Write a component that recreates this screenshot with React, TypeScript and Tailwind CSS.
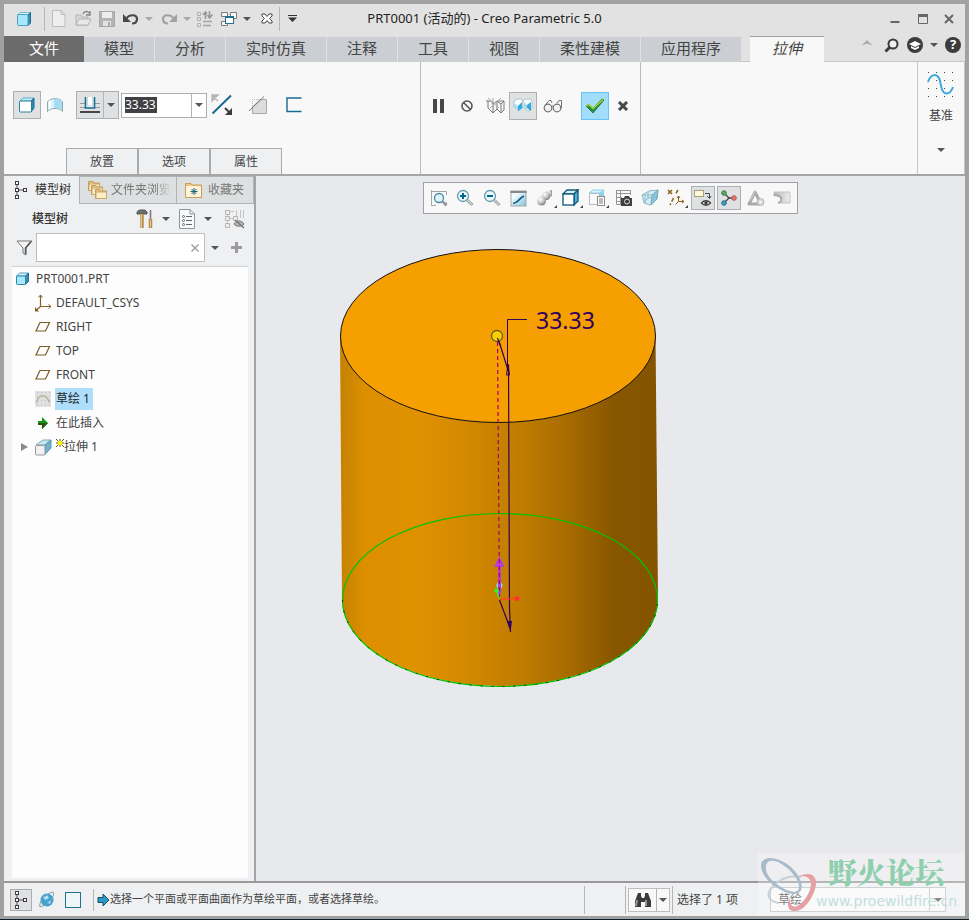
import type { ReactNode } from "react";
import clsx from "clsx";

interface IIcon {
	w?: number;
	h?: number;
	children: ReactNode;
}

const Svg = ({ w = 18, h = 18, children }: IIcon) => (
	<svg
		width={w}
		height={h}
		viewBox={`0 0 ${w} ${h}`}
		fill="none"
		className="shrink-0"
		aria-hidden="true"
	>
		{children}
	</svg>
);

const Caret = ({ color = "#555555" }: { color?: string }) => (
	<Svg w={8} h={4}>
		<path d="M0 0H8L4 4Z" fill={color} />
	</Svg>
);

const Separator = () => <span className="w-px self-stretch bg-[#b4b5b6]" />;

interface IButton {
	label: string;
	className?: string;
	children: ReactNode;
}

const IconButton = ({ label, className, children }: IButton) => (
	<button
		type="button"
		aria-label={label}
		title={label}
		className={clsx("flex shrink-0 items-center justify-center", className)}
	>
		{children}
	</button>
);

/* ---------- icons ---------- */

const SolidCube = () => (
	<Svg w={16} h={16}>
		<path d="M1.500 4L4 1.500H14.500L12 4Z" fill="#ddf5fd" stroke="#74b8d2" />
		<path d="M12 4L14.500 1.500V12L12 14.500Z" fill="#3a8fb4" stroke="#1c6b8e" />
		<rect x="1.500" y="3.500" width="10.500" height="11" rx="1" fill="#a8e8fc" stroke="#4aa0c4" />
	</Svg>
);

// part icon of the tree root, seen more from the side than the application icon
const PartIcon = () => (
	<Svg w={16} h={16}>
		<path d="M1.500 5L4.500 2H13.500L10.500 5Z" fill="#ddf5fd" stroke="#4aa0c4" />
		<path d="M10.500 5L13.500 2V10.500L10.500 13.500Z" fill="#3a8fb4" stroke="#1c6b8e" />
		<rect x="1.500" y="5" width="9" height="8.500" rx="1" fill="#a8e8fc" stroke="#2c87ad" />
	</Svg>
);

const TreeIcon = () => (
	<Svg w={14} h={20}>
		<path d="M3 5V15M5 10H9" stroke="#4c4c4c" />
		<g fill="#ffffff" stroke="#3c3c3c">
			<rect x="1.500" y="1.500" width="3" height="3" />
			<rect x="1.500" y="8.500" width="3" height="3" />
			<rect x="1.500" y="15.500" width="3" height="3" />
			<rect x="9.500" y="8.500" width="3" height="3" />
		</g>
	</Svg>
);

const Plane = () => (
	<Svg w={16} h={16}>
		<path d="M5 3.500H14.500L10.500 12H1Z" stroke="#7d5c22" strokeWidth="1.200" />
	</Svg>
);

const Csys = () => (
	<Svg w={18} h={18}>
		<path d="M6.500 1V12.500H17M6.500 12.500L2 16.500" stroke="#85602a" strokeWidth="1.200" />
		<path d="M4.500 3.500L6.500 1L8.500 3.500M14.500 10.500L17 12.500L14.500 14.500" stroke="#85602a" />
		<path d="M1 13V17.500H5Z" fill="#85602a" />
	</Svg>
);

const SketchIcon = () => (
	<Svg w={16} h={16}>
		<rect width="16" height="16" fill="#e0e0e0" />
		<path
			d="M2 1.500H16M2 5.500H16M2 9.500H16M2 13.500H16"
			stroke="#b8b8b8"
			strokeDasharray="1 3"
		/>
		<path d="M1.500 11.500C4 2.500 11 2.500 14.500 11.500" stroke="#b9b69a" strokeWidth="1.500" />
	</Svg>
);

const InsertArrow = () => (
	<Svg w={12} h={12}>
		<path d="M1 4H5V0L11 6L5 12V8H1Z" fill="#0a9a14" />
		<path d="M1 6H11L5 12V8H1Z" fill="#2d5512" />
	</Svg>
);

const ExtrudeIcon = () => (
	<Svg w={17} h={17}>
		<path d="M1 6L8 1H16L10 6Z" fill="#c6e6f2" stroke="#7fa7b6" />
		<path d="M10 6L16 1V9L10 15.500Z" fill="#6db3cf" stroke="#5e96ad" />
		<rect x="0.500" y="6.500" width="9.500" height="9.500" rx="1" fill="#f1f1f1" stroke="#999999" />
	</Svg>
);

const Magnifier = ({ sign }: { sign?: string }) => (
	<Svg w={18} h={18}>
		<path d="M11 11L16.500 16" stroke="#9ea3a5" strokeWidth="3" />
		<path d="M11 11L16 15.500" stroke="#e8e8e8" strokeWidth="1" />
		<circle cx="7" cy="7" r="5.500" fill="#eaf7fc" stroke="#6599ae" strokeWidth="1.300" />
		{sign === "+" && <path d="M4 7H10M7 4V10" stroke="#05668d" strokeWidth="2" />}
		{sign === "-" && <path d="M4 7H10" stroke="#05668d" strokeWidth="2" />}
	</Svg>
);

const RefitIcon = () => (
	<Svg>
		<path d="M1.500 1V16.500H6M1.500 2.500H16.500V6M16.500 13V16" stroke="#a5a5a5" />
		<circle cx="9" cy="9" r="4.500" fill="#e2f4fa" stroke="#4789a5" strokeWidth="1.300" />
		<path d="M12.500 12.500L16.500 16.500" stroke="#999999" strokeWidth="2.500" />
	</Svg>
);

const RepaintIcon = () => (
	<Svg w={17} h={17}>
		<defs>
			<linearGradient id="paint" x1="0" y1="0" x2="1" y2="1">
				<stop offset="0.300" stopColor="#f2fafd" />
				<stop offset="1" stopColor="#7cc4e0" />
			</linearGradient>
		</defs>
		<rect x="1" y="1" width="15" height="15" fill="url(#paint)" stroke="#a5a5a5" />
		<path d="M0.500 2H16.500" stroke="#888888" strokeWidth="2" />
		<path d="M3 13.500C8 13 8 9 14 6" stroke="#135f82" strokeWidth="1.700" />
	</Svg>
);

const ShadeIcon = () => (
	<Svg>
		<defs>
			<radialGradient id="ball" cx="0.350" cy="0.300" r="0.800">
				<stop offset="0" stopColor="#ffffff" />
				<stop offset="0.500" stopColor="#c9c9c9" />
				<stop offset="1" stopColor="#6c6c6c" />
			</radialGradient>
		</defs>
		<path d="M10 2L16 1V7L10 10Z" fill="url(#ball)" />
		<circle cx="10" cy="7" r="4" fill="url(#ball)" />
		<circle cx="5.500" cy="12" r="4.500" fill="url(#ball)" />
	</Svg>
);

const DisplayStyleIcon = () => (
	<Svg>
		<path d="M1 5L5 1H16L12 5Z" fill="#d5f0fa" stroke="#0f5878" strokeWidth="1.300" />
		<path d="M12 5L16 1V12L12 16Z" fill="#4fb2da" stroke="#0f5878" strokeWidth="1.300" />
		<rect x="1" y="5" width="11" height="11" fill="#ffffff" stroke="#0f5878" strokeWidth="1.300" />
	</Svg>
);

const SavedViewsIcon = () => (
	<Svg>
		<path d="M1 4L5 1H16L12 4Z" fill="#d5f3fd" stroke="#8ed0e8" />
		<path d="M12 4L16 1V10L12 14Z" fill="#8bd3ee" />
		<rect x="1.500" y="4.500" width="10" height="11" fill="#f9f9f9" stroke="#b5bec2" />
		<rect x="9.500" y="7.500" width="7" height="9" fill="#ffffff" stroke="#8b8b8b" />
		<path d="M11 10H15M11 12H15M11 14H15" stroke="#777777" />
	</Svg>
);

const ViewManagerIcon = () => (
	<Svg>
		<path d="M1.500 1.500H15.500V6M1.500 1V15.500H6M1 4.500H15M1 8.500H7M1 12.500H6M5.500 1V15" stroke="#959595" />
		<path d="M6 9H9L10 7H14L15 9H17V17H6Z" fill="#3f3f3f" />
		<circle cx="12" cy="12.500" r="2.500" stroke="#dddddd" />
	</Svg>
);

const PerspectiveIcon = () => (
	<Svg>
		<path d="M1 6L8 2L17 1L16 10L9 16L3 14Z" fill="#d2edf7" stroke="#8fb9c8" />
		<path d="M11 6L17 1L16 10L10 16Z" fill="#8bc4da" stroke="#77a8b9" />
		<path d="M1 6L11 6M3 14L7 9L15 8M7 3V9M4 6V14" stroke="#8fb9c8" />
	</Svg>
);

const DatumDisplayIcon = () => (
	<Svg w={19} h={18}>
		<path d="M1 1L5 5M5 1L1 5" stroke="#876018" strokeWidth="1.500" />
		<path d="M11 1L8 6M6.500 9L3 16" stroke="#876018" strokeWidth="1.500" strokeDasharray="4 2" />
		<path d="M11.500 7V12.500H17M11.500 12.500L8.500 15.500M10 9L11.500 7L13 9M15 11L17 12.500L15 14" stroke="#876018" />
	</Svg>
);

const AnnotationIcon = () => (
	<Svg>
		<rect x="0.500" y="1.500" width="9" height="6" fill="#fff8dc" stroke="#a99e76" />
		<path d="M11 4.500H15.500V9M13 7L15.500 9.500L17 7" stroke="#4b4b4b" />
		<path d="M7.500 14C10 11 14 11 16.500 14C14 17 10 17 7.500 14Z" fill="#ffffff" stroke="#444444" strokeWidth="1.300" />
		<circle cx="12" cy="14" r="1.700" fill="#333333" />
	</Svg>
);

const SpinCenterIcon = () => (
	<Svg>
		<path d="M4 4L9 9L4 14M9 9H14" stroke="#3f3f3f" strokeWidth="1.300" />
		<circle cx="4" cy="4" r="2.300" fill="#5caa68" stroke="#3b7c47" />
		<circle cx="4" cy="14" r="2.300" fill="#3d9ac0" stroke="#277391" />
		<circle cx="14" cy="9" r="2.300" fill="#e87873" stroke="#b8504b" />
	</Svg>
);

const SimulateIcon = () => (
	<Svg>
		<path d="M8 3L14 15H2Z" stroke="#a9a9a9" strokeWidth="3" strokeLinejoin="round" />
		<path d="M8 2L3 12" stroke="#d5d5d5" />
		<circle cx="13.500" cy="13" r="3.500" fill="#d6d6d6" stroke="#b5b5b5" />
		<path d="M12.500 11L15.500 13L12.500 15Z" fill="#f5f5f5" />
	</Svg>
);

const AnimateIcon = () => (
	<Svg>
		<defs>
			<linearGradient id="fade">
				<stop offset="0" stopColor="#b5b5b5" />
				<stop offset="1" stopColor="#eeeeee" />
			</linearGradient>
		</defs>
		<path d="M1 3H17V14H5C10 12 8 6 1 7Z" fill="url(#fade)" stroke="#c2c2c2" />
		<path d="M1 6C10 6 10 12 5 14" stroke="#a5a5a5" strokeWidth="1.500" />
	</Svg>
);

const RibbonCube = () => (
	<Svg w={16} h={16}>
		<path d="M1 4L4 1H15L12 4Z" fill="#c8f0fd" stroke="#58a8c8" />
		<path d="M12 4L15 1V11L12 15Z" fill="#268db5" stroke="#1c6b8e" />
		<rect x="0.500" y="4" width="12" height="11" rx="1" fill="#ffffff" stroke="#2a7fa3" />
	</Svg>
);

const SurfaceIcon = () => (
	<Svg w={18} h={18}>
		<path d="M1.500 6C4 1.500 14 1.500 16.500 6V15.500C14 11.500 4 11.500 1.500 15.500Z" fill="#d9f2fb" stroke="#8fa9b3" />
		<path d="M8 3C12 2.500 15 4 16 6V14C14 12 11 11.500 8 12Z" fill="#a5ddf3" />
		<path d="M4 4.500V12.500" stroke="#f8fdff" strokeWidth="2" />
	</Svg>
);

const DepthIcon = () => (
	<Svg w={20} h={16}>
		<path d="M0 6.500H20M0 10.500H20" stroke="#999999" />
		<path d="M5.500 0V11H14.500V0" fill="#f4f6f7" stroke="#176a90" strokeWidth="1.600" />
		<path d="M7.500 0V9H12.500V0" fill="#ffffff" stroke="#c5dbe4" />
		<path d="M0 15H20" stroke="#444444" strokeWidth="2" />
	</Svg>
);

const FlipIcon = () => (
	<Svg w={22} h={22}>
		<path d="M1.500 19.500L20 1.500" stroke="#176a90" strokeWidth="2" />
		<path d="M1 1H7L1 7ZM2 2L7 7" fill="#b7b7b7" stroke="#b7b7b7" strokeWidth="1.500" />
		<path d="M14 14L19 19" stroke="#3c3c3c" strokeWidth="2" />
		<path d="M21 14V21H14Z" fill="#3c3c3c" />
	</Svg>
);

const RemoveMaterialIcon = () => (
	<Svg w={20} h={20}>
		<path d="M4.500 11V4.500H11" stroke="#b5b5b5" strokeDasharray="1 1" />
		<path d="M4.500 18.500V12L12 4.500H18.500V18.500Z" fill="#dcdcdc" stroke="#aaaaaa" />
		<path d="M1 16L16 1.500" stroke="#777777" />
	</Svg>
);

const ThickenIcon = () => (
	<Svg w={16} h={16}>
		<path d="M15.500 1H1V14.500H15.500" stroke="#176a90" strokeWidth="1.400" />
	</Svg>
);

const WirePreviewIcon = () => (
	<Svg w={20} h={18}>
		<path
			d="M1 4H6L8 7V16L3 11V4M8 7L12 4V12L8 16M12 4L16 7V16L12 12M16 7L19 4V13L16 16M12 4H19"
			stroke="#777777"
		/>
		<path d="M3 1L14 11M16 1L5 11M8 1V6" stroke="#aaaaaa" />
	</Svg>
);

const ShadedPreviewIcon = () => (
	<Svg w={20} h={16}>
		<path d="M1 3L4 1H8L10 3V9L6 13L1 9Z" fill="#ffffff" stroke="#a9c1ca" />
		<path d="M1 5L5 8V13L1 9Z" fill="#a5def3" />
		<path d="M5 8L9 4V10L5 13Z" fill="#33a8db" />
		<path d="M10 3L13 1H17L19 3V11L15 13L10 9Z" fill="#ffffff" stroke="#a9c1ca" />
		<path d="M11 4L14 7V12L11 9Z" fill="#a5def3" />
		<path d="M14 7L18 4V13L14 10Z" fill="#33a8db" />
	</Svg>
);

const GlassesIcon = () => (
	<Svg w={20} h={14}>
		<circle cx="5" cy="9" r="3.800" fill="#f1f1f1" stroke="#727272" strokeWidth="1.200" />
		<circle cx="14" cy="9" r="3.800" fill="#f1f1f1" stroke="#727272" strokeWidth="1.200" />
		<path d="M1.500 7L6 1.500H8L9 4M18.500 9V1.500H16L14 4M8.500 7H10.500" stroke="#727272" />
	</Svg>
);

const CheckIcon = () => (
	<Svg w={20} h={16}>
		<path d="M1 8L4 6L8 10L17 1L19 2L8 15Z" fill="#2c9150" stroke="#2b7d3c" />
		<path d="M1.500 8L4 6.500L8 10.500L18 1.500" stroke="#c0de2a" strokeWidth="1.200" />
	</Svg>
);

const DatumIcon = () => (
	<Svg w={28} h={28}>
		<path
			d="M1 2.500H28M1 10.500H28M1 18.500H28M1 26.500H28"
			stroke="#444444"
			strokeDasharray="1 7"
		/>
		<path
			d="M1 12C4 3 11 3 13 11C14.500 18 15 23 19 23.500C23 24 24.500 21 26 17"
			stroke="#3ba9db"
			strokeWidth="2"
		/>
	</Svg>
);

/* ---------- title bar ---------- */

const quickTools = [
	{
		label: "新建",
		width: "w-6",
		icon: (
			<Svg w={14} h={17}>
				<path d="M0.500 0.500H9L13 4.500V16.500H0.500ZM9 0.500V4.500H13" fill="#eeeeee" stroke="#bdbdbd" />
			</Svg>
		),
	},
	{
		label: "打开",
		width: "w-6",
		icon: (
			<Svg w={17} h={17}>
				<path d="M1 15V5H6L7 7H13V15Z" fill="#d8d8d8" stroke="#b2b2b2" />
				<path d="M1 15L4 9H16L13 15Z" fill="#e8e8e8" stroke="#b2b2b2" />
				<path d="M8 4C9 1 12 1 14 3M11 5H15V1" stroke="#858585" strokeWidth="1.500" />
			</Svg>
		),
	},
	{
		label: "保存",
		width: "w-6",
		icon: (
			<Svg w={16} h={16}>
				<path d="M0.500 0.500H15.500V15.500H0.500Z" fill="#b4b4b4" stroke="#a5a5a5" />
				<path d="M3 1H13V7H3Z" fill="#ececec" />
				<path d="M4 10H12V15H4Z" fill="#e2e2e2" />
				<path d="M9 11H11V15H9Z" fill="#aaaaaa" />
			</Svg>
		),
	},
	{
		label: "撤消",
		width: "w-6",
		icon: (
			<Svg w={16} h={12}>
				<path d="M3 6C6 1 14 1 14 6C14 9 12 10.500 9 10.500" stroke="#484848" strokeWidth="2.200" />
				<path d="M0 1V9H8Z" fill="#484848" />
			</Svg>
		),
	},
	{ label: "撤消列表", width: "w-3", icon: <Caret color="#a9a9a9" /> },
	{
		label: "重做",
		width: "w-7",
		icon: (
			<Svg w={16} h={12}>
				<path d="M13 6C10 1 2 1 2 6C2 9 4 10.500 7 10.500" stroke="#a2a2a2" strokeWidth="2.200" />
				<path d="M16 1V9H8Z" fill="#a2a2a2" />
			</Svg>
		),
	},
	{ label: "重做列表", width: "w-2", icon: <Caret color="#a9a9a9" /> },
	{
		label: "重新生成",
		width: "w-7",
		icon: (
			<Svg w={16} h={16}>
				<path d="M0.500 1.500H3.500V4.500H0.500ZM0.500 6.500H3.500V9.500H0.500ZM0.500 12.500H3.500V15.500H0.500Z" stroke="#b0b0b0" />
				<path d="M6 10.500H15M6 14.500H14" stroke="#a5a5a5" strokeWidth="1.500" />
				<path d="M8.500 8V2M6 4L8.500 1L10 3M12.500 0V6M10.500 4L12.500 7L15.500 3.500" stroke="#969696" strokeWidth="1.500" />
			</Svg>
		),
	},
	{
		label: "窗口",
		width: "w-5",
		icon: (
			<Svg w={16} h={16}>
				<path d="M0.500 1.500H6.500V5.500H0.500ZM9.500 1.500H15.500V7.500H9.500ZM0.500 10.500H6.500V14.500H0.500Z" fill="#f6f6f6" stroke="#7d7d7d" />
				<rect x="4.500" y="5.500" width="8" height="7" fill="#ffffff" stroke="#236f91" />
				<path d="M4 6H13" stroke="#236f91" strokeWidth="2" />
			</Svg>
		),
	},
	{ label: "窗口列表", width: "w-4", icon: <Caret /> },
	{
		label: "关闭",
		width: "w-6",
		icon: (
			<Svg w={12} h={11}>
				<path d="M1 1H4L6 3.500L8 1H11V3L8.500 5.500L11 8V10H8L6 7.500L4 10H1V8L3.500 5.500L1 3Z" fill="#ffffff" stroke="#444444" />
			</Svg>
		),
	},
];

const TitleBar = () => (
	<header className="grid h-8 grid-cols-[1fr_auto_1fr] items-center bg-[#e2e2e2] pb-[3px]">
		<div className="flex h-6 items-center pl-3">
			<SolidCube />
			<span className="ml-3 flex self-stretch">
				<Separator />
			</span>
			<div className="flex items-center pl-0.5">
				{quickTools.map((tool) => (
					<IconButton key={tool.label} label={tool.label} className={tool.width}>
						{tool.icon}
					</IconButton>
				))}
			</div>
			<Separator />
			<IconButton label="自定义快速访问工具栏" className="w-6">
				<Svg w={9} h={7}>
					<path d="M0 0.500H9" stroke="#333333" />
					<path d="M0 2.500H9L4.500 7Z" fill="#333333" />
				</Svg>
			</IconButton>
		</div>
		<h1 className="px-2 text-[13px] text-[#222222]">PRT0001 (活动的) - Creo Parametric 5.0</h1>
		<div className="flex items-center justify-end pr-1">
			<IconButton label="最小化" className="w-7">
				<Svg w={10} h={10}>
					<path d="M0.500 8H9.500" stroke="#666666" strokeWidth="2" />
				</Svg>
			</IconButton>
			<IconButton label="最大化" className="w-7">
				<Svg w={10} h={10}>
					<path d="M0.500 0.500H9.500V9.500H0.500Z" stroke="#666666" />
					<path d="M0 1.500H10" stroke="#666666" strokeWidth="3" />
				</Svg>
			</IconButton>
			<IconButton label="关闭窗口" className="w-6">
				<Svg w={10} h={10}>
					<path d="M1 1L9 9M9 1L1 9" stroke="#666666" strokeWidth="2" />
				</Svg>
			</IconButton>
		</div>
	</header>
);

/* ---------- ribbon ---------- */

const ribbonTabs = ["模型", "分析", "实时仿真", "注释", "工具", "视图", "柔性建模", "应用程序"];

const RibbonTabs = () => (
	<nav className="flex h-[26px] items-stretch bg-[#e2e2e2] text-[15px] text-[#444444]">
		<button type="button" className="w-20 shrink-0 bg-[#6b6b6b] pb-0.5 text-white">
			文件
		</button>
		<div className="flex gap-px pt-px">
			{ribbonTabs.map((tab) => (
				<button key={tab} type="button" className="shrink-0 bg-[#cbcfd3] px-5 pb-0.5">
					{tab}
				</button>
			))}
		</div>
		<span className="w-[9px] border-b border-[#c3c6c9]" />
		<button
			type="button"
			className="w-[74px] shrink-0 border-t border-[#a1a1a1] bg-[#f8f8f8] pb-0.5 italic"
		>
			拉伸
		</button>
		<div className="flex flex-1 items-start justify-end border-b border-[#c3c6c9]">
			<IconButton label="最小化功能区" className="h-3 w-6">
				<Svg w={12} h={7}>
					<path d="M0.500 6.500L6 1L11.500 6.500L6 4.500Z" fill="#aaaaaa" />
				</Svg>
			</IconButton>
			<IconButton label="搜索" className="h-[18px] w-6">
				<Svg w={15} h={15}>
					<circle cx="9" cy="6" r="4.500" fill="#eef2f4" stroke="#3c3c3c" strokeWidth="2" />
					<path d="M6 9L1.500 13.500" stroke="#3c3c3c" strokeWidth="3" />
				</Svg>
			</IconButton>
			<IconButton label="学习中心" className="h-[18px] w-6">
				<Svg w={16} h={16}>
					<circle cx="8" cy="8" r="8" fill="#3c3c3c" />
					<path d="M2 7L8 4L14 7L8 10Z" fill="#ffffff" />
					<path d="M4 9V11L8 13L12 11V9L8 11Z" fill="#ffffff" />
				</Svg>
			</IconButton>
			<IconButton label="学习中心列表" className="h-[18px] w-3.5">
				<Caret />
			</IconButton>
			<IconButton label="帮助" className="h-[18px] w-6">
				<span className="flex size-4 items-center justify-center rounded-full bg-[#3c3c3c] text-[13px] font-bold text-white">
					?
				</span>
			</IconButton>
		</div>
	</nav>
);

const Ribbon = () => (
	<section className="flex border-b-2 border-[#a6a6a6] bg-[#f8f8f8] text-xs text-[#444444]">
		<div className="flex h-28 w-[417px] flex-col justify-between border-r border-[#b9bbbd]">
			<div className="flex items-center pt-[29px] pl-[9px]">
				<IconButton label="实体" className="size-7 border border-[#adb0b2] bg-[#e0e1e3]">
					<RibbonCube />
				</IconButton>
				<IconButton label="曲面" className="w-7">
					<SurfaceIcon />
				</IconButton>
				<div className="ml-[7px] flex h-7 border border-[#adb0b2] bg-[#e0e1e3]">
					<IconButton label="深度" className="w-[26px]">
						<DepthIcon />
					</IconButton>
					<Separator />
					<IconButton label="深度选项" className="w-3.5">
						<Caret />
					</IconButton>
				</div>
				<div className="ml-[2px] flex h-[25px] border border-[#adb0b2] bg-white">
					<div className="flex w-[69px] items-center pl-[3px]">
						<input
							aria-label="深度值"
							defaultValue="33.33"
							className="w-8 bg-[#404144] text-xs leading-4 text-white outline-none"
						/>
					</div>
					<Separator />
					<IconButton label="深度值列表" className="w-3.5">
						<Caret />
					</IconButton>
				</div>
				<IconButton label="反向" className="ml-[3px] w-6">
					<FlipIcon />
				</IconButton>
				<IconButton label="移除材料" className="ml-3 w-6">
					<RemoveMaterialIcon />
				</IconButton>
				<IconButton label="加厚" className="ml-3 w-6">
					<ThickenIcon />
				</IconButton>
			</div>
			<div className="ml-[62px] flex">
				{["放置", "选项", "属性"].map((tab) => (
					<button
						key={tab}
						type="button"
						className="h-[26px] w-[72px] border border-b-0 border-[#a9abad] bg-[#eef0f2]"
					>
						{tab}
					</button>
				))}
			</div>
		</div>
		<div className="flex w-[220px] items-start border-r border-[#b9bbbd] pt-[30px] pl-1">
			<IconButton label="暂停" className="size-7">
				<Svg w={12} h={14}>
					<path d="M2 0V14M9 0V14" stroke="#484848" strokeWidth="4" />
				</Svg>
			</IconButton>
			<IconButton label="无预览" className="size-7">
				<Svg w={14} h={14}>
					<circle cx="7" cy="7" r="5" stroke="#555555" strokeWidth="1.600" />
					<path d="M3.500 3.500L10.500 10.500" stroke="#555555" strokeWidth="1.600" />
				</Svg>
			</IconButton>
			<IconButton label="未连接预览" className="size-7">
				<WirePreviewIcon />
			</IconButton>
			<IconButton label="连接预览" className="size-7 border border-[#adb0b2] bg-[#e0e1e3]">
				<ShadedPreviewIcon />
			</IconButton>
			<IconButton label="校验" className="h-7 w-8">
				<GlassesIcon />
			</IconButton>
			<IconButton label="确定" className="ml-3 size-7 border border-[#67c2f6] bg-[#a2defc]">
				<CheckIcon />
			</IconButton>
			<IconButton label="取消" className="size-7">
				<Svg w={12} h={10}>
					<path d="M2 1L10 9M10 1L2 9" stroke="#484848" strokeWidth="3" />
				</Svg>
			</IconButton>
		</div>
		<div className="flex-1" />
		<button
			type="button"
			className="flex w-12 flex-col items-center border-x border-[#c3c5c7] pt-2"
		>
			<DatumIcon />
			<span className="mt-2.5">基准</span>
			<span className="mt-6">
				<Caret />
			</span>
		</button>
	</section>
);

/* ---------- model tree ---------- */

const Folder = () => (
	<g>
		<path d="M0.500 1.500H5L6 3H11.500V10.500H0.500Z" fill="#e6c482" stroke="#c09a5a" />
		<path d="M1 4H11.500V10.500H1Z" fill="#fdeec9" stroke="#cba768" />
	</g>
);

const treeRows = [
	{ name: "DEFAULT_CSYS", icon: <Csys /> },
	{ name: "RIGHT", icon: <Plane /> },
	{ name: "TOP", icon: <Plane /> },
	{ name: "FRONT", icon: <Plane /> },
	{ name: "草绘 1", icon: <SketchIcon />, selected: true },
	{ name: "在此插入", icon: <InsertArrow /> },
];

const TreeTabs = () => (
	<div className="flex h-7 text-xs">
		<button type="button" className="flex w-[75px] items-center gap-[7px] pl-2.5 text-[#333333]">
			<TreeIcon />
			<span className="whitespace-nowrap">模型树</span>
		</button>
		<button
			type="button"
			className="flex w-[98px] items-center gap-[3px] border border-[#b0b3b5] bg-[#dde0e0] pl-2 text-[#777777]"
		>
			<Svg w={20} h={20}>
				<Folder />
				<g transform="translate(3 4)">
					<Folder />
				</g>
				<g transform="translate(7 8)">
					<Folder />
				</g>
			</Svg>
			<span className="whitespace-nowrap [mask-image:linear-gradient(to_right,black_75%,transparent)]">
				文件夹浏览
			</span>
		</button>
		<button
			type="button"
			className="flex flex-1 items-center gap-1.5 border border-l-0 border-[#b0b3b5] bg-[#dde0e0] pl-2 text-[#777777]"
		>
			<Svg w={17} h={16}>
				<path d="M0.500 1.500H6L7 3H16.500V15.500H0.500Z" fill="#e9c681" stroke="#c79d58" />
				<path d="M1 4H16V15H1Z" fill="#fff3d8" />
				<path d="M9 6V13M5.500 9.500H12.500M6.500 7L11.500 12M11.500 7L6.500 12" stroke="#1c6482" />
			</Svg>
			<span className="whitespace-nowrap">收藏夹</span>
		</button>
	</div>
);

const ModelTree = () => (
	<aside className="flex w-[252px] shrink-0 flex-col border-r-2 border-[#a1a4a8] bg-[#eef0f2] text-xs text-[#444444]">
		<TreeTabs />
		<div className="flex h-[29px] items-center pr-[7px] pl-7">
			<h2 className="flex-1 font-medium text-[#333333]">模型树</h2>
			<IconButton label="设置" className="w-6">
				<Svg w={18} h={20}>
					<path d="M1 4C1 1 4 1 5 1H9L11 3V5H1Z" fill="#6e6e6e" stroke="#555555" />
					<path d="M6 5V19" stroke="#b98d4c" strokeWidth="3.500" />
					<path d="M5.500 5V19" stroke="#e5c78d" />
					<path d="M14.500 1V10" stroke="#777777" strokeWidth="1.500" />
					<path d="M14.500 10V19" stroke="#b98d4c" strokeWidth="3.500" />
					<path d="M14.500 11V18" stroke="#e5c78d" />
				</Svg>
			</IconButton>
			<IconButton label="设置列表" className="w-[18px]">
				<Caret />
			</IconButton>
			<IconButton label="显示" className="w-6">
				<Svg w={16} h={20}>
					<path d="M0.500 0.500H11L15.500 5V19.500H0.500Z" fill="#f6fbfc" stroke="#8d979b" />
					<path d="M11 0.500V5H15.500" stroke="#8d979b" />
					<g stroke="#666666">
						<circle cx="4.500" cy="7.500" r="1" />
						<circle cx="4.500" cy="11.500" r="1" />
						<circle cx="4.500" cy="15.500" r="1" />
						<path d="M7 7.500H13M7 11.500H13M7 15.500H13" />
					</g>
				</Svg>
			</IconButton>
			<IconButton label="显示列表" className="w-[18px]">
				<Caret />
			</IconButton>
			<IconButton label="隐藏树列" className="ml-1.5 w-6">
				<Svg w={20} h={20}>
					<path d="M2.500 4V16M5 2.500H9M5 9.500H9M11.500 1V11M15.500 1V9M18.500 1V9" stroke="#c5c5c5" />
					<path d="M0.500 1.500H4.500V5.500H0.500ZM0.500 7.500H4.500V11.500H0.500ZM0.500 14.500H4.500V18.500H0.500ZM8.500 7.500H12.500V11.500H8.500Z" fill="#eeeeee" stroke="#b5b5b5" />
					<path d="M9 15C11 11 17 11 19 15C17 18 11 18 9 15Z" fill="#b5b5b5" stroke="#777777" />
					<path d="M10 11L19 19" stroke="#777777" strokeWidth="1.500" />
				</Svg>
			</IconButton>
		</div>
		<div className="flex h-[29px] items-center pl-3">
			<Svg w={17} h={16}>
				<path d="M1 1H16L10 8V15L7 13V8Z" fill="#f4f4f4" stroke="#777777" />
				<path d="M15 1.500L9.500 8V14" stroke="#555555" strokeWidth="1.500" />
			</Svg>
			<div className="ml-[3px] flex h-[29px] w-[169px] items-center border border-[#bcbfc1] bg-white">
				<input aria-label="过滤模型树" className="min-w-0 flex-1 px-1 outline-none" />
				<IconButton label="清除" className="w-[18px]">
					<Svg w={8} h={8}>
						<path d="M0.500 0.500L7.500 7.500M7.500 0.500L0.500 7.500" stroke="#999999" strokeWidth="1.300" />
					</Svg>
				</IconButton>
			</div>
			<IconButton label="过滤选项" className="w-5">
				<Caret />
			</IconButton>
			<IconButton label="添加过滤" className="w-[22px]">
				<Svg w={11} h={11}>
					<path d="M5.500 0V11M0 5.500H11" stroke="#9b9b9b" strokeWidth="3" />
				</Svg>
			</IconButton>
		</div>
		<ul className="mt-1 mr-1.5 mb-[3px] ml-2 flex-1 border-t border-[#cfd1d3] bg-[#fdfdfd]">
			<li className="flex h-6 items-center gap-1 pl-[3px]">
				<PartIcon />
				<span className="px-px">PRT0001.PRT</span>
			</li>
			{treeRows.map((row) => (
				<li key={row.name} className="flex h-6 items-center pl-[22px]">
					<span className="flex w-[18px] shrink-0 justify-center">{row.icon}</span>
					<span
						className={clsx(
							"ml-[3px] flex h-[22px] items-center px-px",
							row.selected && "bg-[#addffc] pr-[3px] text-[#222222]"
						)}
					>
						{row.name}
					</span>
				</li>
			))}
			<li className="flex h-6 items-center pl-2">
				<Svg w={8} h={8}>
					<path d="M1 0L8 4L1 8Z" fill="#8a8a8a" />
				</Svg>
				<span className="ml-[7px]">
					<ExtrudeIcon />
				</span>
				<span className="mb-2 ml-1">
					<Svg w={8} h={8}>
						<path d="M0 0L8 8M8 0L0 8M4 0V8M0 4H8" stroke="#5c5412" />
						<circle cx="4" cy="4" r="2.300" fill="#fff000" />
					</Svg>
				</span>
				<span>拉伸 1</span>
			</li>
		</ul>
	</aside>
);

/* ---------- graphics window ---------- */

const viewTools = [
	{ label: "重新调整", icon: <RefitIcon /> },
	{ label: "放大", icon: <Magnifier sign="+" /> },
	{ label: "缩小", icon: <Magnifier sign="-" /> },
	{ label: "重画", icon: <RepaintIcon /> },
	{ label: "渲染选项", icon: <ShadeIcon />, menu: true },
	{ label: "显示样式", icon: <DisplayStyleIcon />, menu: true },
	{ label: "已保存方向", icon: <SavedViewsIcon />, menu: true },
	{ label: "视图管理器", icon: <ViewManagerIcon /> },
	{ label: "透视图", icon: <PerspectiveIcon /> },
	{ label: "基准显示过滤器", icon: <DatumDisplayIcon />, menu: true },
	{ label: "注释显示", icon: <AnnotationIcon />, active: true },
	{ label: "旋转中心", icon: <SpinCenterIcon />, active: true },
	{ label: "仿真", icon: <SimulateIcon /> },
	{ label: "动画", icon: <AnimateIcon /> },
];

const ViewToolbar = () => (
	<div className="mx-auto mt-1.5 flex h-8 w-[375px] items-center justify-between border border-[#a1a1a1] bg-[#f8f8f8] px-[3px]">
		{viewTools.map((tool) => (
			<IconButton
				key={tool.label}
				label={tool.label}
				className={clsx(
					"relative size-6",
					tool.active && "border border-[#adb0b2] bg-[#dfe0e2]"
				)}
			>
				{tool.icon}
				{tool.menu && (
					<span className="absolute right-0 bottom-0.5">
						<Svg w={3} h={3}>
							<path d="M3 0V3H0Z" fill="#444444" />
						</Svg>
					</span>
				)}
			</IconButton>
		))}
	</div>
);

const Cylinder = () => (
	<svg
		width="340"
		height="460"
		viewBox="330 240 340 460"
		fill="none"
		className="absolute top-16 left-[74px]"
		role="img"
		aria-label="拉伸预览"
	>
		<defs>
			<linearGradient id="side">
				<stop offset="0" stopColor="#c58100" />
				<stop offset="0.080" stopColor="#dd8f00" />
				<stop offset="0.250" stopColor="#e09100" />
				<stop offset="0.420" stopColor="#d08700" />
				<stop offset="0.570" stopColor="#c07c00" />
				<stop offset="0.720" stopColor="#a66b00" />
				<stop offset="0.860" stopColor="#875600" />
				<stop offset="1" stopColor="#855400" />
			</linearGradient>
		</defs>
		<path d="M340 337L342 601A158 86 0 0 0 658 599L655.500 335Z" fill="url(#side)" />
		<ellipse cx="498" cy="336" rx="157.500" ry="86.500" fill="#f69f00" stroke="#111111" />
		<ellipse cx="500" cy="600" rx="157.500" ry="86.500" stroke="#00c400" strokeWidth="1.200" />
		<path
			d="M342.500 600A157.500 86.500 0 0 0 657.500 600"
			stroke="#0a3500"
			strokeDasharray="2 9"
		/>
		<path d="M527 319.500H507.500V371" stroke="#32005c" />
		<path d="M498 338L508 370M508.500 365L509.500 608L510.500 632M499.500 600L510 628" stroke="#32005c" strokeWidth="1.200" />
		<path d="M506.500 375L508 364L509.500 375Z" stroke="#32005c" />
		<path d="M507 621H512L510.500 632Z" fill="#32005c" />
		<circle cx="499.500" cy="585.500" r="3" fill="#79e0dc" />
		<path d="M499.500 563V594" stroke="#b63ddb" strokeWidth="3" />
		<path d="M499.500 556L504.500 567H494Z" fill="#b63ddb" />
		<path d="M497.500 342L499.500 597" stroke="#a5006c" strokeWidth="1.200" strokeDasharray="4 3" />
		<path d="M496.500 590.500L499 598" stroke="#38e838" strokeWidth="1.500" />
		<circle cx="496.500" cy="590.500" r="2.300" fill="#32f032" />
		<path d="M500 599.500L517 598" stroke="#ff3c28" strokeWidth="1.200" />
		<circle cx="517" cy="598.500" r="2.500" fill="#ff3232" />
		<circle cx="497" cy="336" r="5.500" fill="#fbd000" stroke="#655d1c" strokeWidth="1.300" />
		<path d="M497.500 338L500 345" stroke="#32005c" strokeWidth="1.200" />
		<text x="536" y="329" fontSize="23" fill="#32005c">
			33.33
		</text>
	</svg>
);

/* ---------- status bar ---------- */

const StatusBar = () => (
	<footer className="flex h-[35px] items-center border-t-2 border-[#999999] bg-[#eef0f2] text-xs text-[#444444]">
		<IconButton label="模型树开关" className="ml-1.5 size-[22px] border border-[#aaacae] bg-[#dfe1e3]">
			<TreeIcon />
		</IconButton>
		<IconButton label="浏览器" className="ml-1 w-[22px]">
			<Svg w={18} h={18}>
				<circle cx="9" cy="9" r="6.500" fill="#3ea4d2" />
				<path d="M5 6L9 4L11 7L7 9ZM9 11L13 9L12 13Z" fill="#b5e5f6" />
				<path d="M2 16C0 12 8 2 15 1C18 4 10 14 2 16Z" stroke="#8a9ba3" />
			</Svg>
		</IconButton>
		<IconButton label="全屏" className="ml-1 w-[22px]">
			<Svg w={16} h={16}>
				<rect x="0.500" y="0.500" width="15" height="15" fill="#edf5f9" stroke="#21718f" />
			</Svg>
		</IconButton>
		<div className="ml-[9px] flex h-[22px] flex-1 items-center border-l border-[#b4b6b8] pl-[3px]">
			<Svg w={13} h={14}>
				<path d="M1 4.500H6V1L12 7L6 13V9.500H1Z" fill="#2c99c4" stroke="#11526f" />
			</Svg>
			<p className="text-[11px] whitespace-nowrap">
				选择一个平面或平面曲面作为草绘平面，或者选择草绘。
			</p>
		</div>
		<div className="h-7 w-[42px] border-x border-[#b4b6b8]" />
		<div className="ml-0.5 flex h-6 border border-[#bcbec0] bg-[#f8f8f8]">
			<IconButton label="查找" className="w-[27px]">
				<Svg w={18} h={16}>
					<path d="M4 1H7V4L8 6H10L11 4V1H14L17 9V15H11V10H7V15H1V9Z" fill="#3b3b3b" />
					<path d="M3 8L2 14M12 8V14" stroke="#9a9a9a" strokeWidth="2" />
				</Svg>
			</IconButton>
			<Separator />
			<IconButton label="查找选项" className="w-3">
				<Caret />
			</IconButton>
		</div>
		<div className="ml-0.5 flex h-7 w-[98px] items-center border-l border-[#b4b6b8] pl-1">
			选择了 1 项
		</div>
		<div className="relative mr-[19px] flex h-[25px] w-[176px] border border-[#bcbec0] bg-[#f8f8f8]">
			<select
				aria-label="选择过滤器"
				defaultValue="草绘"
				className="w-full appearance-none bg-transparent pl-[7px] outline-none"
			>
				<option>草绘</option>
			</select>
			<span className="pointer-events-none absolute inset-y-0 right-0 flex w-4 items-center justify-center border-l border-[#bcbec0]">
				<Caret />
			</span>
		</div>
	</footer>
);

const Watermark = () => (
	<div className="pointer-events-none absolute right-0 bottom-0 flex h-[63px] w-[207px] bg-white/30">
		<svg width="58" height="63" viewBox="0 0 58 63" fill="none" aria-hidden="true" className="shrink-0">
			<path
				d="M43 24C30 21 18 28 12 37C8 44 13 49 21 50"
				stroke="#c6d0d6"
				strokeWidth="2"
			/>
			<path
				fillRule="evenodd"
				fill="#a9bbc9"
				d="M3 14C2 3 16 2 29 11C39 18 46 30 43 37C40 44 28 41 18 34C9 28 4 21 3 14ZM8 14C7 21 14 29 23 34C31 39 40 41 41 35C42 28 34 18 25 12C17 6 8 6 8 14Z"
			/>
			<path
				fill="#e5a0a5"
				d="M38 25C48 18 59 20 58 31C57 43 46 58 38 58C30 59 28 52 32 44C31 52 35 56 41 52C48 47 53 37 53 31C53 24 46 21 38 25Z"
			/>
		</svg>
		<div className="flex flex-col">
			<p className="pl-3 font-['Noto_Serif_CJK_SC','Noto_Sans_CJK_SC',serif] text-[29px] leading-[38px] font-black whitespace-nowrap text-[#8fcfad]">
				野火论坛
			</p>
			<p className="font-['DejaVu_Sans',sans-serif] text-sm leading-5 whitespace-nowrap text-[#bfe0dc]">
				www.proewildfire.cn
			</p>
		</div>
	</div>
);

const App = () => {
	return (
		<div className="flex min-h-screen flex-col bg-[#0d1d29] pb-px font-['Noto_Sans','Noto_Sans_CJK_SC',sans-serif]">
			<div className="relative flex flex-1 flex-col border-4 border-b-[3px] border-[#a1a1a1]">
				<TitleBar />
				<RibbonTabs />
				<Ribbon />
				<main className="flex flex-1">
					<ModelTree />
					<section className="relative min-h-[600px] flex-1 bg-[#e8e9ed]">
						<ViewToolbar />
						<Cylinder />
					</section>
				</main>
				<StatusBar />
				<Watermark />
			</div>
		</div>
	);
};

export default App;
